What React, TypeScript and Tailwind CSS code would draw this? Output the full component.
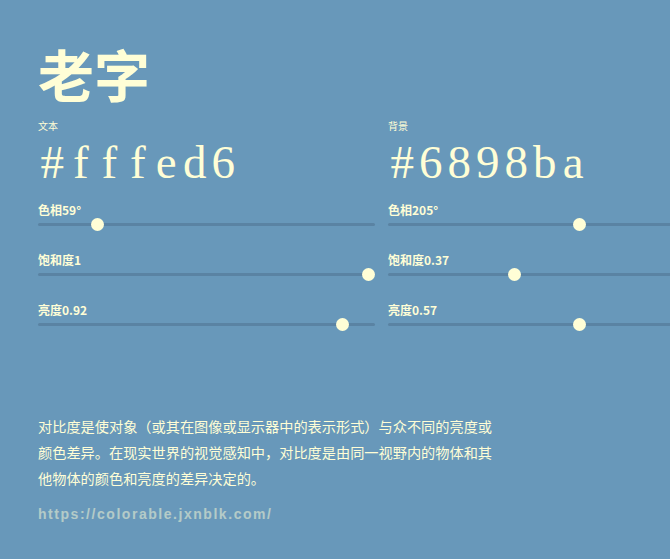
import React from 'react';

type Channel = {
  label: string;
  value: string;
  pct: number; // posição do cursor, 0..1
};

type ColorColumn = {
  title: string;
  hex: string;
  channels: Channel[];
};

const columns: ColorColumn[] = [
  {
    title: '文本',
    hex: '#fffed6',
    channels: [
      { label: '色相', value: '59°', pct: 59 / 360 },
      { label: '饱和度', value: '1', pct: 1 },
      { label: '亮度', value: '0.92', pct: 0.92 },
    ],
  },
  {
    title: '背景',
    hex: '#6898ba',
    channels: [
      { label: '色相', value: '205°', pct: 205 / 360 },
      { label: '饱和度', value: '0.37', pct: 0.37 },
      { label: '亮度', value: '0.57', pct: 0.57 },
    ],
  },
];

const Slider: React.FC<{ channel: Channel }> = ({ channel }) => (
  <div className="mb-[22px]">
    <div className="text-[12px] font-bold leading-[14px]">
      {channel.label}
      {channel.value}
    </div>
    <div className="relative h-[14px]">
      <div className="absolute left-0 right-0 top-[6px] h-[3px] rounded-full bg-[#5a83a3]" />
      <div
        className="absolute top-[0.5px] h-[13px] w-[13px] rounded-full bg-[#fffed6]"
        style={{ left: `calc((100% - 13px) * ${channel.pct})` }}
      />
    </div>
  </div>
);

// cada caractere numa caixa fixa, imitando a fonte monoespaçada serifada
const HexValue: React.FC<{ hex: string }> = ({ hex }) => (
  <div
    className="h-[46px] text-[47px] leading-[46px] whitespace-nowrap"
    style={{ fontFamily: '"Liberation Serif", "DejaVu Serif", serif' }}
  >
    {hex.split('').map((ch, i) => (
      <span key={i} className="inline-block w-[28.5px] text-center">
        {ch}
      </span>
    ))}
  </div>
);

export default function App() {
  return (
    <div
      className="h-[559px] w-[670px] overflow-hidden bg-[#6898ba] text-[#fffed6]"
      style={{ fontFamily: '"Noto Sans CJK SC", "Noto Sans", sans-serif' }}
    >
      <div className="w-[725px] pl-[38px] pt-[45px]">
        <h1 className="text-[56px] font-bold leading-none">老字</h1>

        <div className="mt-[19px] grid grid-cols-[337px_337px] gap-x-[13px]">
          {columns.map(col => (
            <div key={col.hex}>
              <div className="text-[10px] leading-[12px]">{col.title}</div>
              <div className="mt-[6.5px] mb-[18.5px]">
                <HexValue hex={col.hex} />
              </div>
              {col.channels.map(ch => (
                <Slider key={ch.label} channel={ch} />
              ))}
            </div>
          ))}
        </div>

        <p className="mt-[60px] max-w-[462px] text-[14.2px] leading-[26px]">
          对比度是使对象（或其在图像或显示器中的表示形式）与众不同的亮度或颜色差异。在现实世界的视觉感知中，对比度是由同一视野内的物体和其他物体的颜色和亮度的差异决定的。
        </p>

        <a
          href="https://colorable.jxnblk.com/"
          className="mt-[13px] block text-[14px] font-bold leading-[20px] tracking-[0.11em] opacity-50"
          style={{ fontFamily: '"Liberation Sans", Arial, sans-serif' }}
        >
          https://colorable.jxnblk.com/
        </a>
      </div>
    </div>
  );
}
